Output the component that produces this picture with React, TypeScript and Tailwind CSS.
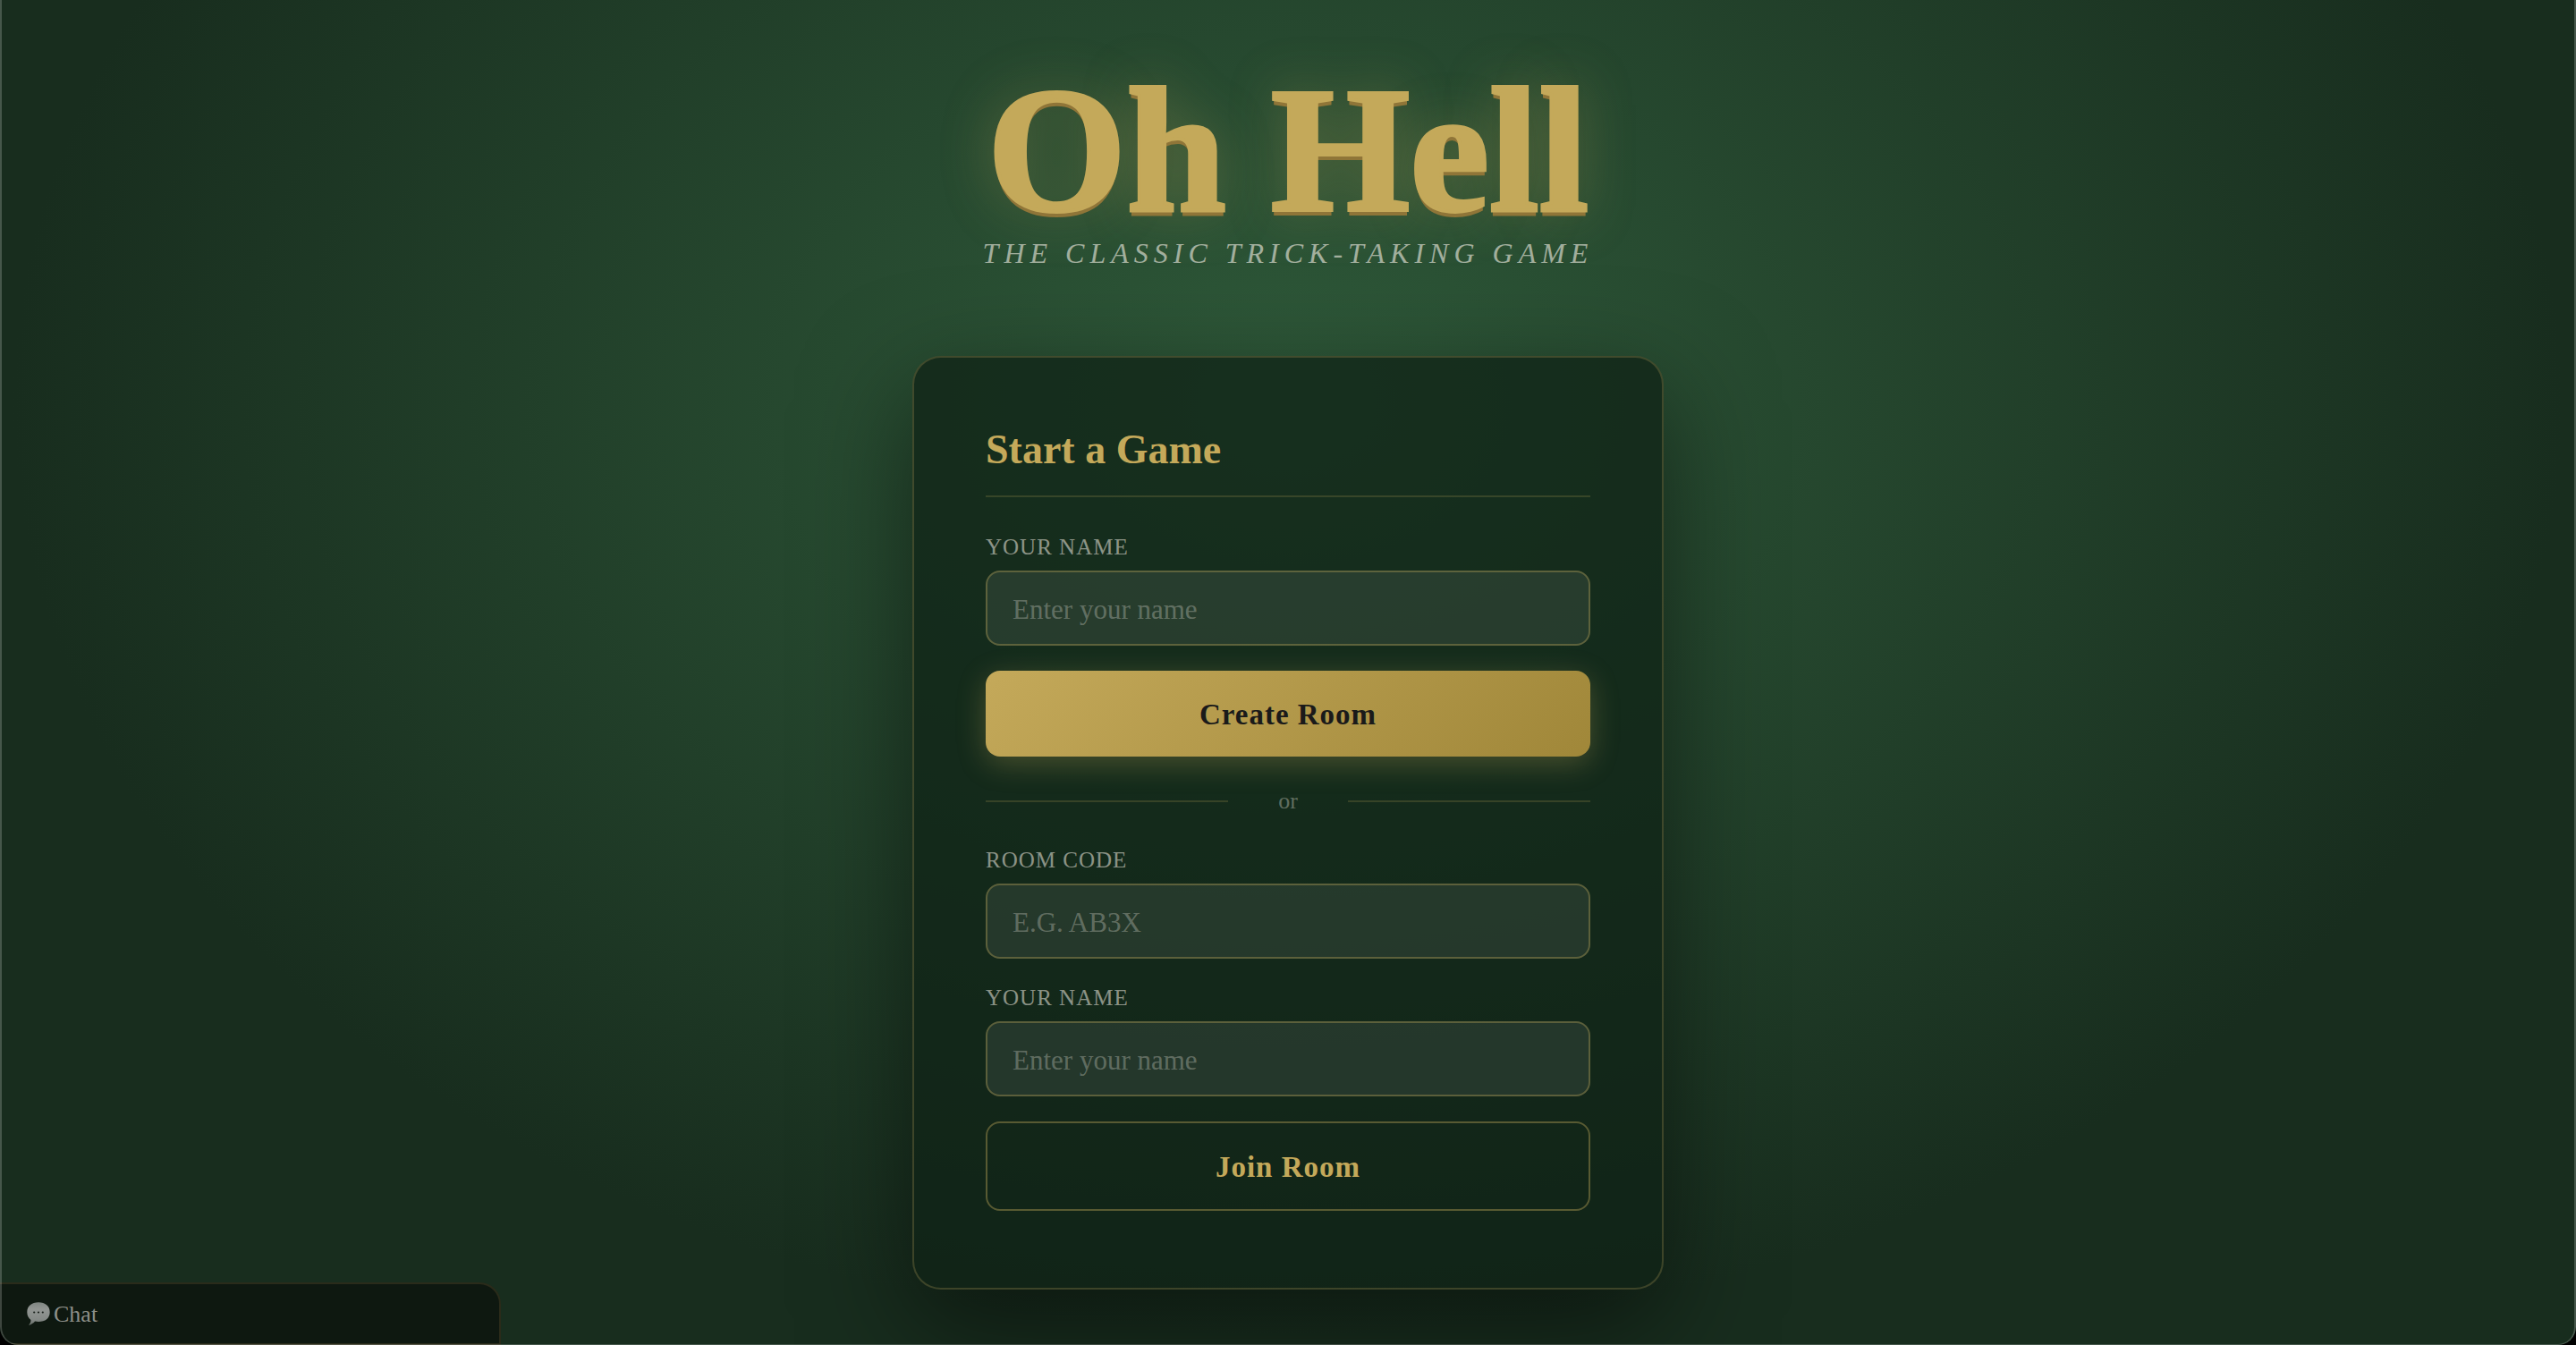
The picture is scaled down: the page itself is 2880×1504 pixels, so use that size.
import { useState } from 'react';

type FieldProps = {
  id: string;
  label: string;
  placeholder: string;
  value: string;
  onChange: (value: string) => void;
  upper?: boolean;
};

function Field({ id, label, placeholder, value, onChange, upper }: FieldProps) {
  return (
    <div className="mb-7 flex flex-col">
      <label
        htmlFor={id}
        className="mb-[10px] text-[25px] leading-8 tracking-[1px] uppercase text-[#f5f0e6]/55"
      >
        {label}
      </label>
      <input
        id={id}
        type="text"
        value={value}
        placeholder={placeholder}
        onChange={(e) => onChange(e.target.value)}
        className={
          'h-[84px] w-full rounded-2xl border-2 border-[#c4a95a]/35 bg-white/8 px-7 pt-[3px] text-[31px] text-[#f5f0e6] outline-none placeholder:text-[#f5f0e6]/30 focus:border-[#c4a95a]' +
          (upper ? ' uppercase' : '')
        }
      />
    </div>
  );
}

function ChatIcon() {
  return (
    <svg viewBox="0 0 26 26" className="h-[26px] w-[26px]" aria-hidden="true">
      <defs>
        <linearGradient id="bubble" x1="0" y1="0" x2="0" y2="1">
          <stop offset="0" stopColor="#7f8581" />
          <stop offset="0.3" stopColor="#929693" />
          <stop offset="0.75" stopColor="#858a87" />
          <stop offset="1" stopColor="#666d68" />
        </linearGradient>
      </defs>
      <path
        d="M13 0.2C20.6 0.2 25.7 4.2 25.7 11.2C25.7 18.2 20.6 21.9 13 21.9C11.6 21.9 10.3 21.8 9.1 21.6C7.4 23.6 5.2 25.2 2.9 25.7C2.3 25.8 2.2 25.3 2.6 24.9C3.8 23.6 4.5 21.9 4.5 19.9C1.8 18 0.3 15 0.3 11.2C0.3 4.2 5.4 0.2 13 0.2Z"
        fill="url(#bubble)"
      />
      <circle cx="8.2" cy="11.5" r="1.1" fill="#1a211c" />
      <circle cx="13" cy="11.5" r="1.1" fill="#1a211c" />
      <circle cx="17.8" cy="11.5" r="1.1" fill="#1a211c" />
    </svg>
  );
}

export default function App() {
  const [hostName, setHostName] = useState('');
  const [roomCode, setRoomCode] = useState('');
  const [guestName, setGuestName] = useState('');

  return (
    <div className="min-h-screen bg-black font-['Liberation_Serif',serif]">
      <div className="relative min-h-screen overflow-hidden rounded-b-[20px] bg-[#182d1e] bg-[radial-gradient(ellipse_at_50%_30%,#2f5a3a_0%,#182d1e_70%)]">
        <main className="flex flex-col items-center px-6 pt-[72px] pb-[60px]">
          {/* HEADER */}
          <header className="mb-24 text-center">
            <h1 className="text-[200px] leading-[192px] font-bold text-[#c4a95a] [-webkit-text-stroke:4px_#c4a95a] [text-shadow:0_6px_0_#8f7538,0_0_60px_rgba(196,169,90,0.35)]">
              Oh Hell
            </h1>
            <p className="text-[32px] leading-[38px] tracking-[6px] uppercase italic text-[#f5f0e6]/60">
              The classic trick-taking game
            </p>
          </header>

          {/* START CARD */}
          <section className="w-full max-w-[840px] rounded-[32px] border-2 border-[#c4a95a]/25 bg-[#0f2216]/75 px-20 pt-20 pb-[86px] shadow-[0_40px_120px_rgba(0,0,0,0.5)]">
            <h2 className="mb-10 border-b-2 border-[#c4a95a]/20 pb-7 text-[46px] leading-[46px] font-bold text-[#c4a95a]">
              Start a Game
            </h2>

            <form onSubmit={(e) => e.preventDefault()}>
              <Field
                id="host-name"
                label="Your name"
                placeholder="Enter your name"
                value={hostName}
                onChange={setHostName}
              />
              <button
                type="submit"
                className="h-24 w-full rounded-2xl bg-[linear-gradient(135deg,#c4a95a_0%,#a08739_100%)] pt-[3px] text-[33px] font-bold tracking-[1px] text-[#1a1a1a] shadow-[0_8px_32px_rgba(196,169,90,0.3)]"
              >
                Create Room
              </button>
            </form>

            <div className="my-9 flex items-center gap-14 text-[26px] leading-[28px] text-[#f5f0e6]/35">
              <span className="h-[2px] flex-1 bg-[#c4a95a]/20" />
              or
              <span className="h-[2px] flex-1 bg-[#c4a95a]/20" />
            </div>

            <form onSubmit={(e) => e.preventDefault()}>
              <Field
                id="room-code"
                label="Room code"
                placeholder="e.g. AB3X"
                value={roomCode}
                onChange={setRoomCode}
                upper
              />
              <Field
                id="guest-name"
                label="Your name"
                placeholder="Enter your name"
                value={guestName}
                onChange={setGuestName}
              />
              <button
                type="submit"
                className="h-[100px] w-full rounded-2xl border-2 border-[#c4a95a]/40 pt-[3px] text-[33px] font-bold tracking-[1px] text-[#c4a95a]"
              >
                Join Room
              </button>
            </form>
          </section>
        </main>

        {/* CHAT */}
        <button
          type="button"
          className="absolute bottom-0 left-0 flex h-[70px] w-[560px] items-center gap-1 rounded-tr-3xl border-2 border-l-0 border-[#2a2b1a] bg-[#0e1810] pl-[30px] text-left text-[26px] text-[#8d8f89]"
        >
          <ChatIcon />
          Chat
        </button>

        {/* window edge */}
        <div className="pointer-events-none absolute inset-0 rounded-b-[20px] border-x-2 border-b border-white/20" />
      </div>
    </div>
  );
}
